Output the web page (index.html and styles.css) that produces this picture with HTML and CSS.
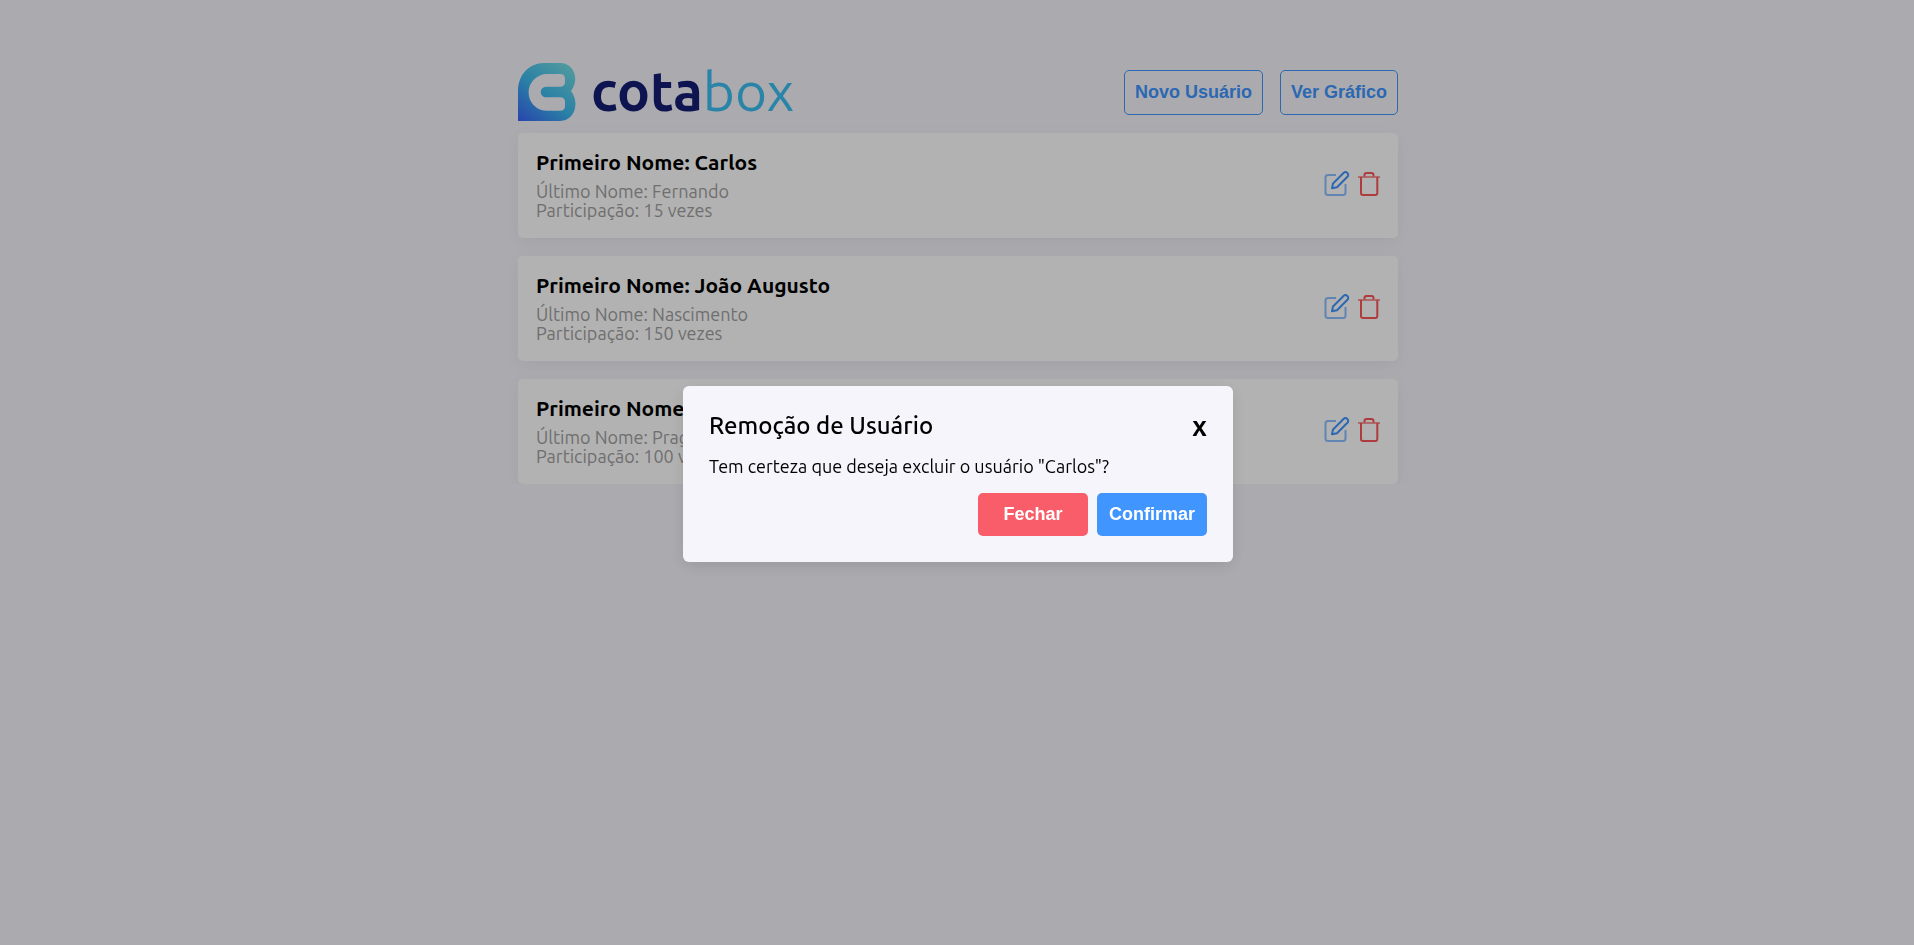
FILE: index.html
```html
<!DOCTYPE html>
<html lang="pt-BR">
<head>
<meta charset="utf-8">
<meta name="viewport" content="width=device-width, initial-scale=1">
<title>Cotabox</title>
<link rel="stylesheet" href="styles.css">
</head>
<body>
<svg width="0" height="0" class="sprite" aria-hidden="true">
  <symbol id="edit" viewBox="0 0 26 26">
    <path opacity=".6" d="M12 4H4a2.500 2.500 0 0 0-2.500 2.500v15A2.500 2.500 0 0 0 4 24h15a2.500 2.500 0 0 0 2.500-2.500V13"/>
    <path d="M8 17.300l1-4.800L19.500 2a2.600 2.600 0 0 1 3.900 3.800L13 16.200z"/>
  </symbol>
  <symbol id="trash" viewBox="0 0 22 26">
    <path opacity=".6" d="M0 6h22"/>
    <path d="M6.500 5.500V4a2 2 0 0 1 2-2h5a2 2 0 0 1 2 2v1.500M3 6v16a2 2 0 0 0 2 2h12.300a2 2 0 0 0 2-2V6"/>
  </symbol>
</svg>
<div class="page">
  <header class="header">
    <div class="logo">
      <svg class="logo-mark" viewBox="0 0 58 58" aria-hidden="true">
        <defs>
          <linearGradient id="mark" x1="0" y1="1" x2="0.8" y2="0">
            <stop offset="0" stop-color="#3a62f8"/>
            <stop offset=".5" stop-color="#3db9ee"/>
            <stop offset="1" stop-color="#70dbe4"/>
          </linearGradient>
        </defs>
        <path fill="url(#mark)" fill-rule="evenodd" d="M0 58V28C0 12 11 0 26 0H42C56 0 62 16 53 28C62 39 57 58 42 58ZM42 11H29A18.400 18.400 0 0 0 29 47.800H42Q47 47.800 47 43V39Q47 34.300 42 34.300H28A5.300 5.300 0 0 1 28 23.700H42Q47 23.700 47 19V16Q47 11 42 11Z"/>
      </svg>
      <span class="logo-text"><span class="logo-cota">cota</span><span class="logo-box">box</span></span>
    </div>
    <nav class="actions">
      <button class="outline" type="button">Novo Usuário</button>
      <button class="outline" type="button">Ver Gráfico</button>
    </nav>
  </header>
  <main class="list">
    <article class="card">
      <div>
        <h2>Primeiro Nome: Carlos</h2>
        <p>Último Nome: Fernando</p>
        <p>Participação: 15 vezes</p>
      </div>
      <div class="tools">
        <button type="button" class="edit" aria-label="Editar"><svg width="26" height="26"><use href="#edit"/></svg></button>
        <button type="button" class="trash" aria-label="Excluir"><svg width="22" height="26"><use href="#trash"/></svg></button>
      </div>
    </article>
    <article class="card">
      <div>
        <h2>Primeiro Nome: João Augusto</h2>
        <p>Último Nome: Nascimento</p>
        <p>Participação: 150 vezes</p>
      </div>
      <div class="tools">
        <button type="button" class="edit" aria-label="Editar"><svg width="26" height="26"><use href="#edit"/></svg></button>
        <button type="button" class="trash" aria-label="Excluir"><svg width="22" height="26"><use href="#trash"/></svg></button>
      </div>
    </article>
    <article class="card">
      <div>
        <h2>Primeiro Nome:</h2>
        <p>Último Nome: Prag</p>
        <p>Participação: 100 v</p>
      </div>
      <div class="tools">
        <button type="button" class="edit" aria-label="Editar"><svg width="26" height="26"><use href="#edit"/></svg></button>
        <button type="button" class="trash" aria-label="Excluir"><svg width="22" height="26"><use href="#trash"/></svg></button>
      </div>
    </article>
  </main>
</div>
<div class="overlay">
  <section class="modal" role="dialog" aria-modal="true" aria-labelledby="modal-title">
    <div class="modal-head">
      <h1 id="modal-title">Remoção de Usuário</h1>
      <button type="button" class="close">x</button>
    </div>
    <p>Tem certeza que deseja excluir o usuário "Carlos"?</p>
    <div class="modal-actions">
      <button type="button" class="solid danger">Fechar</button>
      <button type="button" class="solid primary">Confirmar</button>
    </div>
  </section>
</div>
</body>
</html>
```
FILE: styles.css
```css
* { box-sizing: border-box; margin: 0; padding: 0; }

body {
  padding-left: 2px;
  background: #f5f5fb;
  color: #000;
  font-family: Ubuntu, Roboto, sans-serif;
  font-size: 18px;
  line-height: 19px;
}

button { font: inherit; color: inherit; background: none; border: 0; cursor: pointer; }

.sprite { position: absolute; }

.page { max-width: 880px; margin: 0 auto; padding-top: 56px; }

.header { display: flex; justify-content: space-between; align-items: center; height: 72px; }

.logo { display: flex; align-items: center; gap: 15px; padding-bottom: 1px; }
.logo-mark { width: 58px; height: 58px; }
.logo-text { display: flex; padding-bottom: 2px; font-size: 55px; line-height: 58px; }
.logo-cota { font-weight: 700; color: #131d72; }
.logo-box { font-weight: 400; color: #3dbdf0; }

.actions { display: flex; gap: 17px; }
.outline,
.solid { font-family: "Liberation Sans", Arial, sans-serif; font-size: 18px; font-weight: 700; border-radius: 5px; }
.outline { height: 45px; padding: 0 10px; border: 1px solid #4095ff; color: #4095ff; }

.list { display: flex; flex-direction: column; gap: 18px; padding-top: 5px; }
.card {
  display: flex;
  justify-content: space-between;
  align-items: center;
  padding: 18px;
  background: #fff;
  border-radius: 5px;
  box-shadow: 0 4px 16px rgba(0, 0, 0, .05);
}
.card h2 { margin-bottom: 9px; font-size: 21px; font-weight: 600; line-height: 22px; }
.card p { color: #a0a0a0; }

.tools { display: flex; gap: 8px; padding-bottom: 4px; }
.tools svg { display: block; fill: none; stroke: currentColor; stroke-width: 2; stroke-linejoin: round; }
.tools .edit { color: #4095ff; }
.tools .trash { color: #f95558; }

.overlay {
  position: fixed;
  inset: 0;
  display: flex;
  align-items: center;
  justify-content: center;
  padding: 3px 0 0 2px;
  background: rgba(0, 0, 0, .3);
}
.modal {
  width: 550px;
  padding: 27px 26px 26px;
  background: #f5f5fb;
  border-radius: 6px;
  box-shadow: 0 4px 16px rgba(0, 0, 0, .1);
}
.modal-head { display: flex; justify-content: space-between; align-items: center; margin-bottom: 18px; }
.modal h1 { font-size: 24px; font-weight: 500; line-height: 26px; }
.close { font-size: 27px; font-weight: 700; line-height: 26px; }
.modal-actions { display: flex; justify-content: flex-end; gap: 9px; margin-top: 17px; }
.modal-actions .solid { width: 110px; height: 43px; color: #fff; }
.danger { background: #f95d6a; }
.primary { background: #4095ff; }
```
